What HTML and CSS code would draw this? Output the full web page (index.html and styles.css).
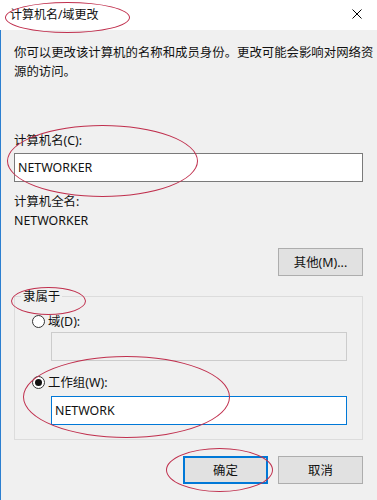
FILE: index.html
```html
<!DOCTYPE html>
<html lang="zh-CN">
<head>
  <meta charset="UTF-8">
  <title>计算机名/域更改</title>
  <link rel="stylesheet" href="styles.css">
</head>
<body>

  <div class="dialog">
    <!-- Title bar -->
    <div class="titlebar">
      <span class="title">计算机名/域更改</span>
      <svg class="close" width="10" height="10" viewBox="0 0 10 10">
        <path d="M0.5 0.5 L9.5 9.5 M9.5 0.5 L0.5 9.5" stroke="#000" stroke-width="1" fill="none"/>
      </svg>
    </div>

    <!-- Body -->
    <div class="body">
      <p class="desc">你可以更改该计算机的名称和成员身份。更改可能会影响对网络资源的访问。</p>

      <div class="label label-name">计算机名(C):</div>
      <div class="field">NETWORKER</div>

      <div class="label label-full">计算机全名:</div>
      <div class="label">NETWORKER</div>

      <div class="row-right">
        <button class="btn">其他(M)...</button>
      </div>

      <fieldset class="group">
        <legend>隶属于</legend>
        <div class="group-body">
          <div class="radio radio-first"><span class="dot"></span>域(D):</div>
          <div class="field field-sub field-disabled"></div>
          <div class="radio radio-on"><span class="dot"></span>工作组(W):</div>
          <div class="field field-sub field-focus">NETWORK</div>
        </div>
      </fieldset>

      <div class="actions">
        <button class="btn btn-default">确定</button>
        <button class="btn">取消</button>
      </div>
    </div>

    <!-- red annotation marks -->
    <div class="mark mark-title"></div>
    <div class="mark mark-name"></div>
    <div class="mark mark-group"></div>
    <div class="mark mark-work"></div>
    <div class="mark mark-ok"></div>
  </div>

</body>
</html>
```

FILE: styles.css
```css
* { margin: 0; padding: 0; box-sizing: border-box; }
html, body {
  background: #f0f0f0;
}
body {
  font-family: "Noto Sans", "Noto Sans CJK SC", sans-serif;
  font-size: 12.4px;
  color: #111;
}
.dialog {
  position: relative;
  width: 377px;
  min-height: 100vh;
  display: flex;
  flex-direction: column;
}
.titlebar {
  height: 30px;
  background: #fff;
  display: flex;
  align-items: center;
  justify-content: space-between;
  padding: 0 15px 2px 10px;
}
.title {
  font-size: 12px;
  line-height: 19px;
}
.body {
  flex: 1;
  border-left: 1px solid #2b7fd0;
  padding: 13px 14px 16px 13px;
}
.desc {
  line-height: 19px;
  margin-right: -20px;
}
.label {
  line-height: 19px;
}
.label-name { margin-top: 50px; }
.label-full { margin-top: 10px; }
.field {
  height: 29px;
  margin-top: 3px;
  background: #fff;
  border: 1px solid #7a7a7a;
  padding: 0 3px;
  line-height: 27px;
}
.row-right {
  margin-top: 18px;
  display: flex;
  justify-content: flex-end;
}
.btn {
  width: 85px;
  height: 28px;
  background: #e1e1e1;
  border: 1px solid #adadad;
  font-family: inherit;
  font-size: 12.4px;
  color: #111;
}
.btn-default {
  border: 2px solid #0078d7;
}
.group {
  margin-top: 11px;
  border: 1px solid #dcdcdc;
  padding: 0 15px 14px 0;
}
.group legend {
  margin-left: 6px;
  padding: 0 2px;
  line-height: 19px;
}
.group-body {
  padding-left: 17px;
}
.radio {
  display: flex;
  align-items: center;
  gap: 3px;
  line-height: 19px;
  margin-top: 12px;
}
.radio-first { margin-top: 6px; }
.dot {
  position: relative;
  width: 13px;
  height: 13px;
  border: 1px solid #333;
  border-radius: 50%;
  background: #fff;
}
.radio-on .dot::after {
  content: "";
  position: absolute;
  left: 2px;
  top: 2px;
  width: 7px;
  height: 7px;
  border-radius: 50%;
  background: #111;
}
.field-sub {
  margin-left: 19px;
}
.radio-first + .field-sub { margin-top: 1px; }
.radio-on + .field-sub { margin-top: 4px; }
.field-disabled {
  background: #f0f0f0;
  border-color: #cccccc;
}
.field-focus {
  border-color: #0078d7;
}
.actions {
  margin-top: 16px;
  display: flex;
  justify-content: flex-end;
  gap: 10px;
}
.mark {
  position: absolute;
  border: 1px solid #c0304e;
  border-radius: 50%;
  pointer-events: none;
}
.mark-title { left: 5px; top: 2px; width: 125px; height: 31px; }
.mark-name { left: 7px; top: 125px; width: 191px; height: 72px; }
.mark-group { left: 11px; top: 287px; width: 75px; height: 28px; }
.mark-work { left: 23px; top: 356px; width: 207px; height: 82px; }
.mark-ok { left: 166px; top: 448px; width: 107px; height: 44px; }
```
